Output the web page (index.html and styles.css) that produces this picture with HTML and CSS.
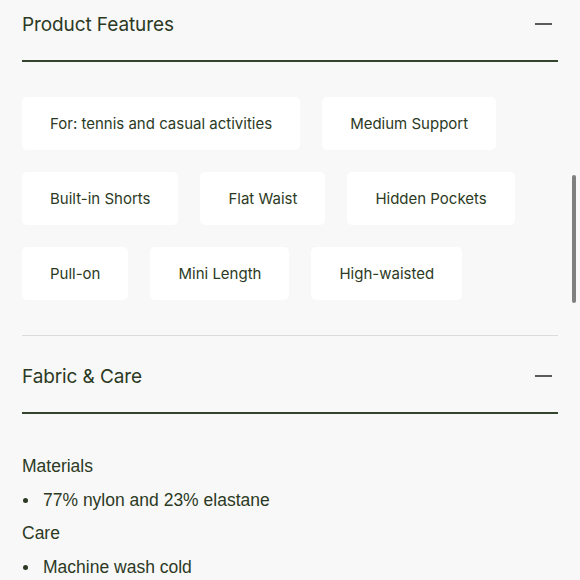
FILE: index.html
```html
<!DOCTYPE html>
<html lang="en">
<head>
<meta charset="utf-8">
<title>Product details</title>
<link rel="stylesheet" href="styles.css">
</head>
<body>
<main class="page">
  <section class="acc acc-first">
    <div class="acc-head">
      <h2 class="acc-title">Product Features</h2>
      <span class="minus" aria-hidden="true"></span>
    </div>
    <div class="chips">
      <span class="chip">For: tennis and casual activities</span>
      <span class="chip">Medium Support</span>
      <span class="chip">Built-in Shorts</span>
      <span class="chip">Flat Waist</span>
      <span class="chip">Hidden Pockets</span>
      <span class="chip">Pull-on</span>
      <span class="chip">Mini Length</span>
      <span class="chip">High-waisted</span>
    </div>
  </section>
  <section class="acc">
    <div class="acc-head">
      <h2 class="acc-title">Fabric &amp; Care</h2>
      <span class="minus" aria-hidden="true"></span>
    </div>
    <div class="care">
      <p class="care-label">Materials</p>
      <ul class="care-list"><li>77% nylon and 23% elastane</li></ul>
      <p class="care-label">Care</p>
      <ul class="care-list"><li>Machine wash cold</li></ul>
    </div>
  </section>
</main>
<div class="scrollbar" aria-hidden="true"></div>
</body>
</html>
```
FILE: styles.css
```css
html, body {
  margin: 0;
  padding: 0;
  background: #f8f8f8;
  height: 580px;
  overflow: hidden;
}
body {
  font-family: "Inter", "Liberation Sans", sans-serif;
  color: #2c3a24;
}
.page {
  padding: 0 22px;
}
.acc {
  border-top: 1px solid #dcdcdc;
  padding-top: 16px;
}
.acc-first {
  border-top: 0;
  padding-top: 0;
  padding-bottom: 35px;
}
.acc-head {
  display: flex;
  align-items: center;
  justify-content: space-between;
  height: 48px;
  padding-bottom: 12px;
  border-bottom: 2px solid #34432c;
}
.acc-title {
  margin: 0;
  font-size: 19px;
  font-weight: 400;
  letter-spacing: -0.1px;
}
.minus {
  width: 17px;
  height: 2px;
  background: #5a5a5a;
  margin-right: 6px;
}
.chips {
  display: flex;
  flex-wrap: wrap;
  gap: 22px;
  padding-top: 35px;
}
.chip {
  display: flex;
  align-items: center;
  height: 53px;
  padding: 0 28px;
  box-sizing: border-box;
  background: #ffffff;
  border-radius: 5px;
  font-size: 15px;
}
.care {
  padding-top: 36px;
  font-family: "Liberation Sans", Arial, sans-serif;
  font-size: 17.5px;
}
.care-label {
  margin: 0;
  line-height: 33.5px;
}
.care-list {
  margin: 0;
  padding: 0;
  list-style: none;
}
.care-list li {
  display: flex;
  align-items: center;
  line-height: 33.5px;
}
.care-list li::before {
  content: "";
  width: 5px;
  height: 5px;
  border-radius: 50%;
  background: currentColor;
  margin: 0 15px 0 1px;
}
.scrollbar {
  position: fixed;
  left: 572px;
  top: 175px;
  width: 4px;
  height: 128px;
  border-radius: 2px;
  background: #808080;
}
```
